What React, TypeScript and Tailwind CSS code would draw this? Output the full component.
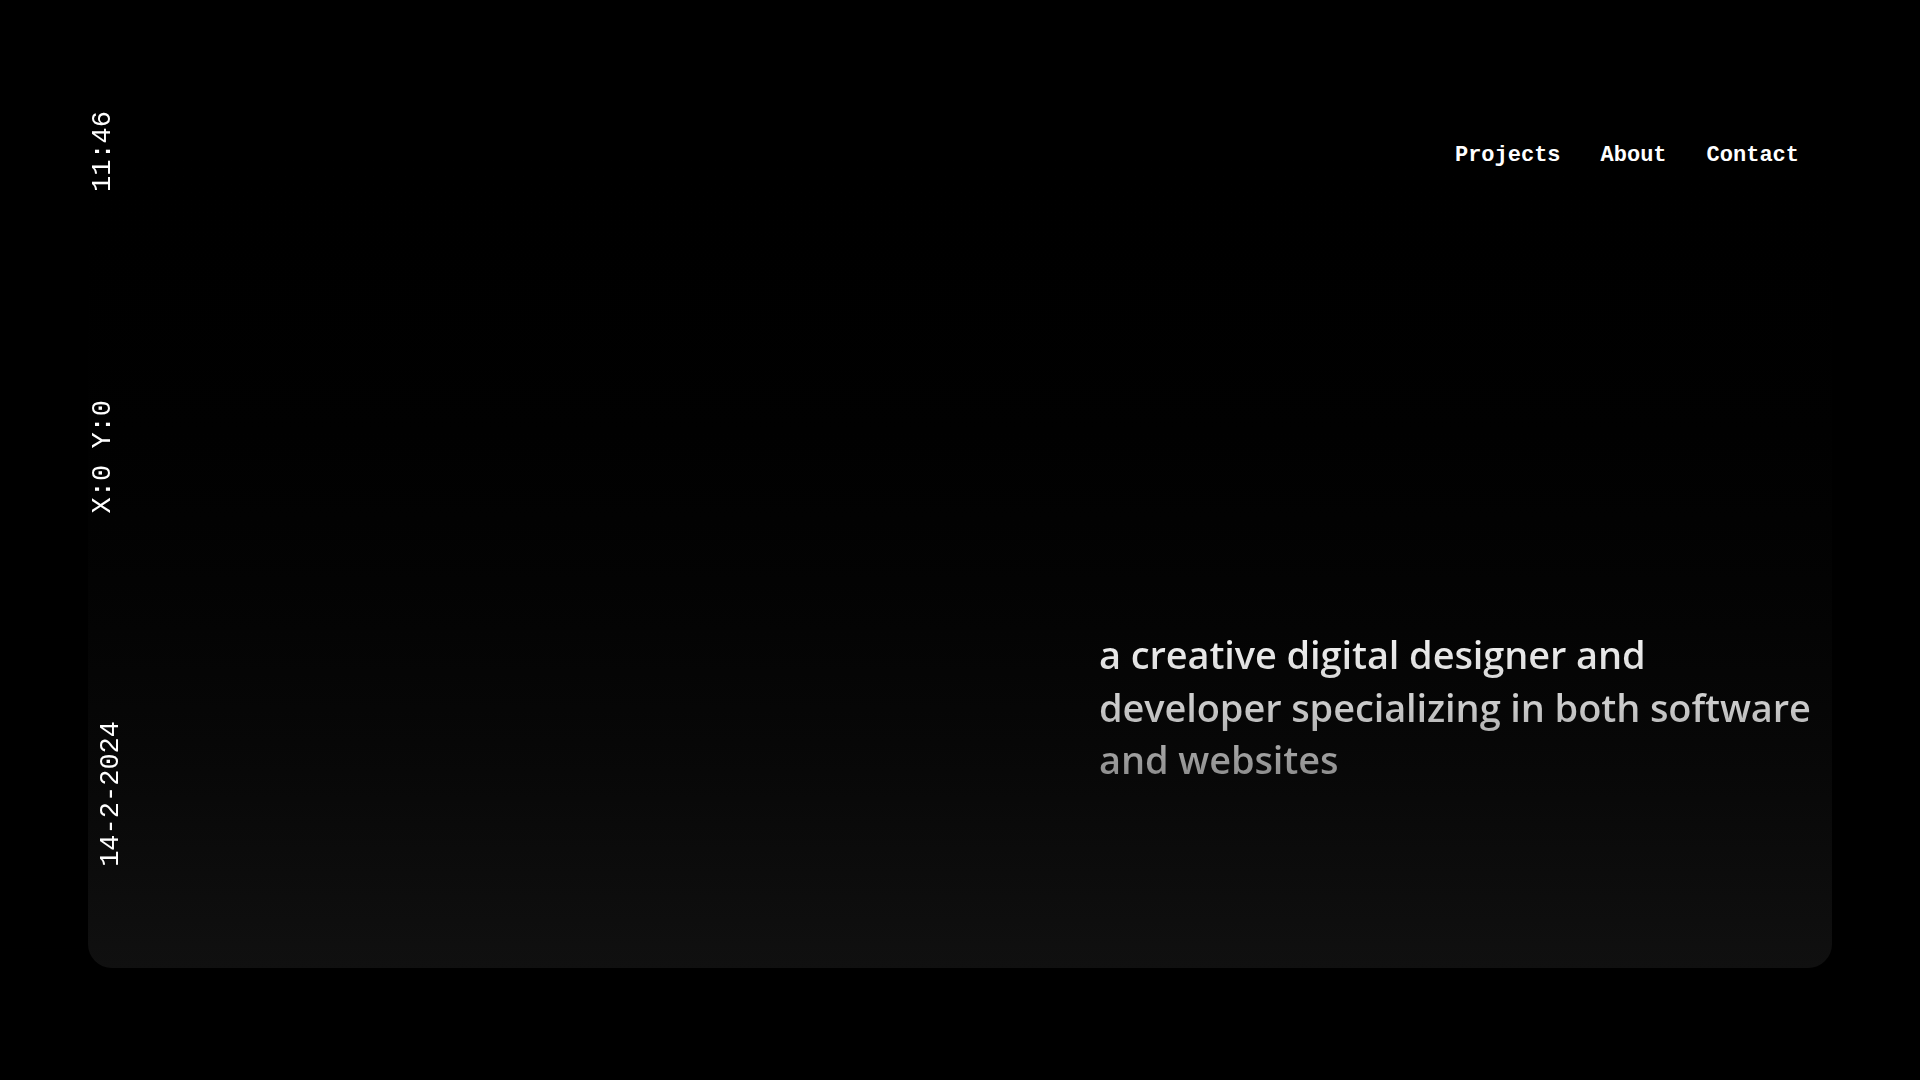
const mono = { fontFamily: '"Liberation Mono", "DejaVu Sans Mono", monospace' };

function SideLabel({ children, className = "" }: { children: React.ReactNode; className?: string }) {
  return (
    <span
      className={"block rotate-180 text-[27px] leading-[27px] text-white whitespace-nowrap [writing-mode:vertical-rl] " + className}
      style={mono}
    >
      {children}
    </span>
  );
}

function Sidebar() {
  return (
    <div className="flex w-[40px] shrink-0 flex-col items-start gap-[208px] pt-[23px]">
      <SideLabel className="ml-[2px]">11:46</SideLabel>
      <SideLabel className="ml-[2px]">X:0 Y:0</SideLabel>
      <SideLabel className="ml-[10px]">14-2-2024</SideLabel>
    </div>
  );
}

function Nav() {
  return (
    <nav className="flex justify-end gap-[40px] pt-[57px] pr-[33px]">
      {["Projects", "About", "Contact"].map((item) => (
        <a key={item} href="#" className="text-[22px] font-bold leading-[22px] text-white" style={mono}>
          {item}
        </a>
      ))}
    </nav>
  );
}

export default function App() {
  return (
    <div className="min-h-screen w-full bg-black px-[88px] pt-[88px] pb-[112px]">
      <div className="flex h-[880px] w-full overflow-hidden rounded-3xl bg-gradient-to-b from-black to-[#101010]">
        <Sidebar />
        <main className="flex flex-1 flex-col">
          <Nav />
          <div className="mt-[461px] ml-[971px]">
            <p
              className="inline-block bg-gradient-to-b from-[#f7f7f7] via-[#c9c9c9] to-[#858585] bg-clip-text text-[38px] font-semibold leading-[52.5px] tracking-[-0.003em] text-transparent"
              style={{ fontFamily: '"Open Sans", "Noto Sans", sans-serif' }}
            >
              a creative digital designer and
              <br />
              developer specializing in both software
              <br />
              and websites
            </p>
          </div>
        </main>
      </div>
    </div>
  );
}
